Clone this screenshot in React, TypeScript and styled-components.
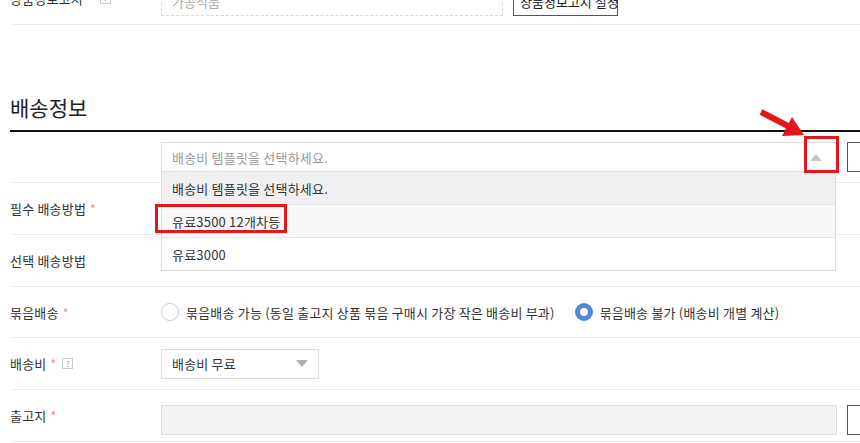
import styled, { createGlobalStyle } from 'styled-components';

const GlobalStyle = createGlobalStyle`
  html, body {
    margin: 0;
    padding: 0;
    background: #fff;
    overflow: hidden;
  }
  body {
    font-family: "Noto Sans CJK KR", "Noto Sans", sans-serif;
    color: #333;
  }
`;

const Page = styled.div`
  position: relative;
  width: 920px;
  margin-top: -27px;
  padding-left: 10px;
`;

const Row = styled.div`
  display: grid;
  grid-template-columns: 151px 1fr;
  align-items: center;
  box-sizing: border-box;
  height: 51.7px;
  border-bottom: 1px solid #ebebeb;
`;

const Label = styled.div`
  display: flex;
  align-items: center;
  font-size: 13px;
  letter-spacing: 0.2px;
  color: #333;
  white-space: nowrap;
`;

const Required = styled.span`
  color: #f08a8a;
  margin-left: 4px;
  font-size: 12px;
`;

const Help = styled.span<{ $gap?: number }>`
  display: inline-flex;
  align-items: center;
  justify-content: center;
  box-sizing: border-box;
  width: 11px;
  height: 11px;
  margin-left: ${(p) => p.$gap ?? 6}px;
  border: 1px solid #ccc;
  color: #aaa;
  font-size: 8px;
  line-height: 1;
`;

const Field = styled.div<{ $top?: number }>`
  display: flex;
  align-items: center;
  gap: 10px;
  ${(p) => (p.$top !== undefined ? `align-self: start; padding-top: ${p.$top}px;` : '')}
`;

const DashedInput = styled.div`
  box-sizing: border-box;
  width: 342px;
  height: 30px;
  display: flex;
  align-items: center;
  padding: 0 10px;
  border: 1px dashed #d8d8d8;
  color: #aaa;
  font-size: 13px;
`;

const OutlineButton = styled.button<{ $width?: number }>`
  box-sizing: border-box;
  width: ${(p) => p.$width ?? 60}px;
  height: 30px;
  padding: 0 6px;
  border: 1px solid #555;
  border-radius: 0;
  background: #fff;
  color: #222;
  font-family: inherit;
  font-size: 13px;
  white-space: nowrap;
`;

const SectionTitle = styled.h2`
  margin: 67px 0 0;
  padding-bottom: 8px;
  border-bottom: 2px solid #111;
  font-size: 21px;
  line-height: 30px;
  font-weight: 400;
  color: #222;
`;

const SelectWrap = styled.div<{ $width: number }>`
  position: relative;
  width: ${(p) => p.$width}px;
`;

const SelectBox = styled.div`
  box-sizing: border-box;
  height: 30px;
  display: flex;
  align-items: center;
  justify-content: space-between;
  padding: 0 10px;
  border: 1px solid #ddd;
  background: #fff;
  font-size: 13px;
  letter-spacing: 0.2px;
`;

const Placeholder = styled.span`
  color: #999;
`;

const Value = styled.span`
  color: #333;
`;

const Caret = styled.span<{ $up?: boolean }>`
  width: 0;
  height: 0;
  border-left: 6px solid transparent;
  border-right: 6px solid transparent;
  ${(p) =>
    p.$up
      ? 'border-bottom: 7px solid #c4c4c4; margin-right: 4px;'
      : 'border-top: 7px solid #b0b0b0;'}
`;

const Dropdown = styled.ul`
  position: absolute;
  top: 30px;
  left: 0;
  right: 1px;
  z-index: 5;
  margin: 0;
  padding: 0;
  list-style: none;
  border: 1px solid #ddd;
  border-top: none;
  background: #fff;
`;

const Option = styled.li<{ $tone: 'active' | 'hover' | 'plain' }>`
  box-sizing: border-box;
  height: 33px;
  display: flex;
  align-items: center;
  padding: 0 10px;
  font-size: 13px;
  letter-spacing: 0.2px;
  color: #333;
  background: ${(p) => (p.$tone === 'active' ? '#f0f0f2' : p.$tone === 'hover' ? '#f8f8f8' : '#fff')};
  border-bottom: 1px solid #e6e6e6;
  &:last-child {
    border-bottom: none;
    height: 32px;
  }
`;

const GrayInput = styled.div`
  box-sizing: border-box;
  width: 676px;
  height: 30px;
  border: 1px solid #ddd;
  background: #f2f2f4;
`;

const RadioGroup = styled.div`
  display: flex;
  align-items: center;
  gap: 20px;
  font-size: 13px;
  letter-spacing: 0.2px;
  color: #333;
`;

const RadioLabel = styled.label`
  display: flex;
  align-items: center;
  gap: 7px;
  white-space: nowrap;
`;

const RadioDot = styled.span<{ $checked?: boolean }>`
  box-sizing: border-box;
  width: 18px;
  height: 18px;
  border-radius: 50%;
  background: #fff;
  border: ${(p) => (p.$checked ? '5px solid #4f86dc' : '1px solid #c8c8c8')};
`;

const RedBox = styled.div<{ $x: number; $y: number; $w: number; $h: number }>`
  position: absolute;
  left: ${(p) => p.$x}px;
  top: ${(p) => p.$y}px;
  width: ${(p) => p.$w}px;
  height: ${(p) => p.$h}px;
  box-sizing: border-box;
  border: 3px solid #e3161b;
  z-index: 10;
  pointer-events: none;
`;

const ArrowMark = styled.svg`
  position: absolute;
  left: 755px;
  top: 132px;
  z-index: 10;
`;

export default function App() {
  return (
    <>
      <GlobalStyle />
      <Page>
        <Row>
          <Label>
            상품정보고시
            <Help $gap={17}>?</Help>
          </Label>
          <Field $top={13}>
            <DashedInput>가공식품</DashedInput>
            <OutlineButton $width={105}>상품정보고시 설정</OutlineButton>
          </Field>
        </Row>

        <SectionTitle>배송정보</SectionTitle>

        <Row>
          <Label />
          <Field>
            <SelectWrap $width={676}>
              <SelectBox>
                <Placeholder>배송비 템플릿을 선택하세요.</Placeholder>
                <Caret $up />
              </SelectBox>
              <Dropdown>
                <Option $tone="active">배송비 템플릿을 선택하세요.</Option>
                <Option $tone="hover">유료3500 12개차등</Option>
                <Option $tone="plain">유료3000</Option>
              </Dropdown>
            </SelectWrap>
            <OutlineButton />
          </Field>
        </Row>

        <Row>
          <Label>
            필수 배송방법<Required>*</Required>
          </Label>
          <Field />
        </Row>

        <Row>
          <Label>선택 배송방법</Label>
          <Field />
        </Row>

        <Row>
          <Label>
            묶음배송<Required>*</Required>
          </Label>
          <RadioGroup>
            <RadioLabel>
              <RadioDot />
              묶음배송 가능 (동일 출고지 상품 묶음 구매시 가장 작은 배송비 부과)
            </RadioLabel>
            <RadioLabel>
              <RadioDot $checked />
              묶음배송 불가 (배송비 개별 계산)
            </RadioLabel>
          </RadioGroup>
        </Row>

        <Row>
          <Label>
            배송비<Required>*</Required>
            <Help>?</Help>
          </Label>
          <Field>
            <SelectWrap $width={158}>
              <SelectBox>
                <Value>배송비 무료</Value>
                <Caret />
              </SelectBox>
            </SelectWrap>
          </Field>
        </Row>

        <Row>
          <Label>
            출고지<Required>*</Required>
          </Label>
          <Field $top={15}>
            <GrayInput />
            <OutlineButton />
          </Field>
        </Row>

        <ArrowMark width="52" height="32" viewBox="0 0 52 32">
          <line x1="6" y1="7" x2="33" y2="21" stroke="#e3161b" strokeWidth="6" />
          <polygon points="27,31 37,12 49,30" fill="#e3161b" />
        </ArrowMark>
        <RedBox $x={804} $y={163} $w={35} $h={37} />
        <RedBox $x={155} $y={231} $w={132} $h={29} />
      </Page>
    </>
  );
}
